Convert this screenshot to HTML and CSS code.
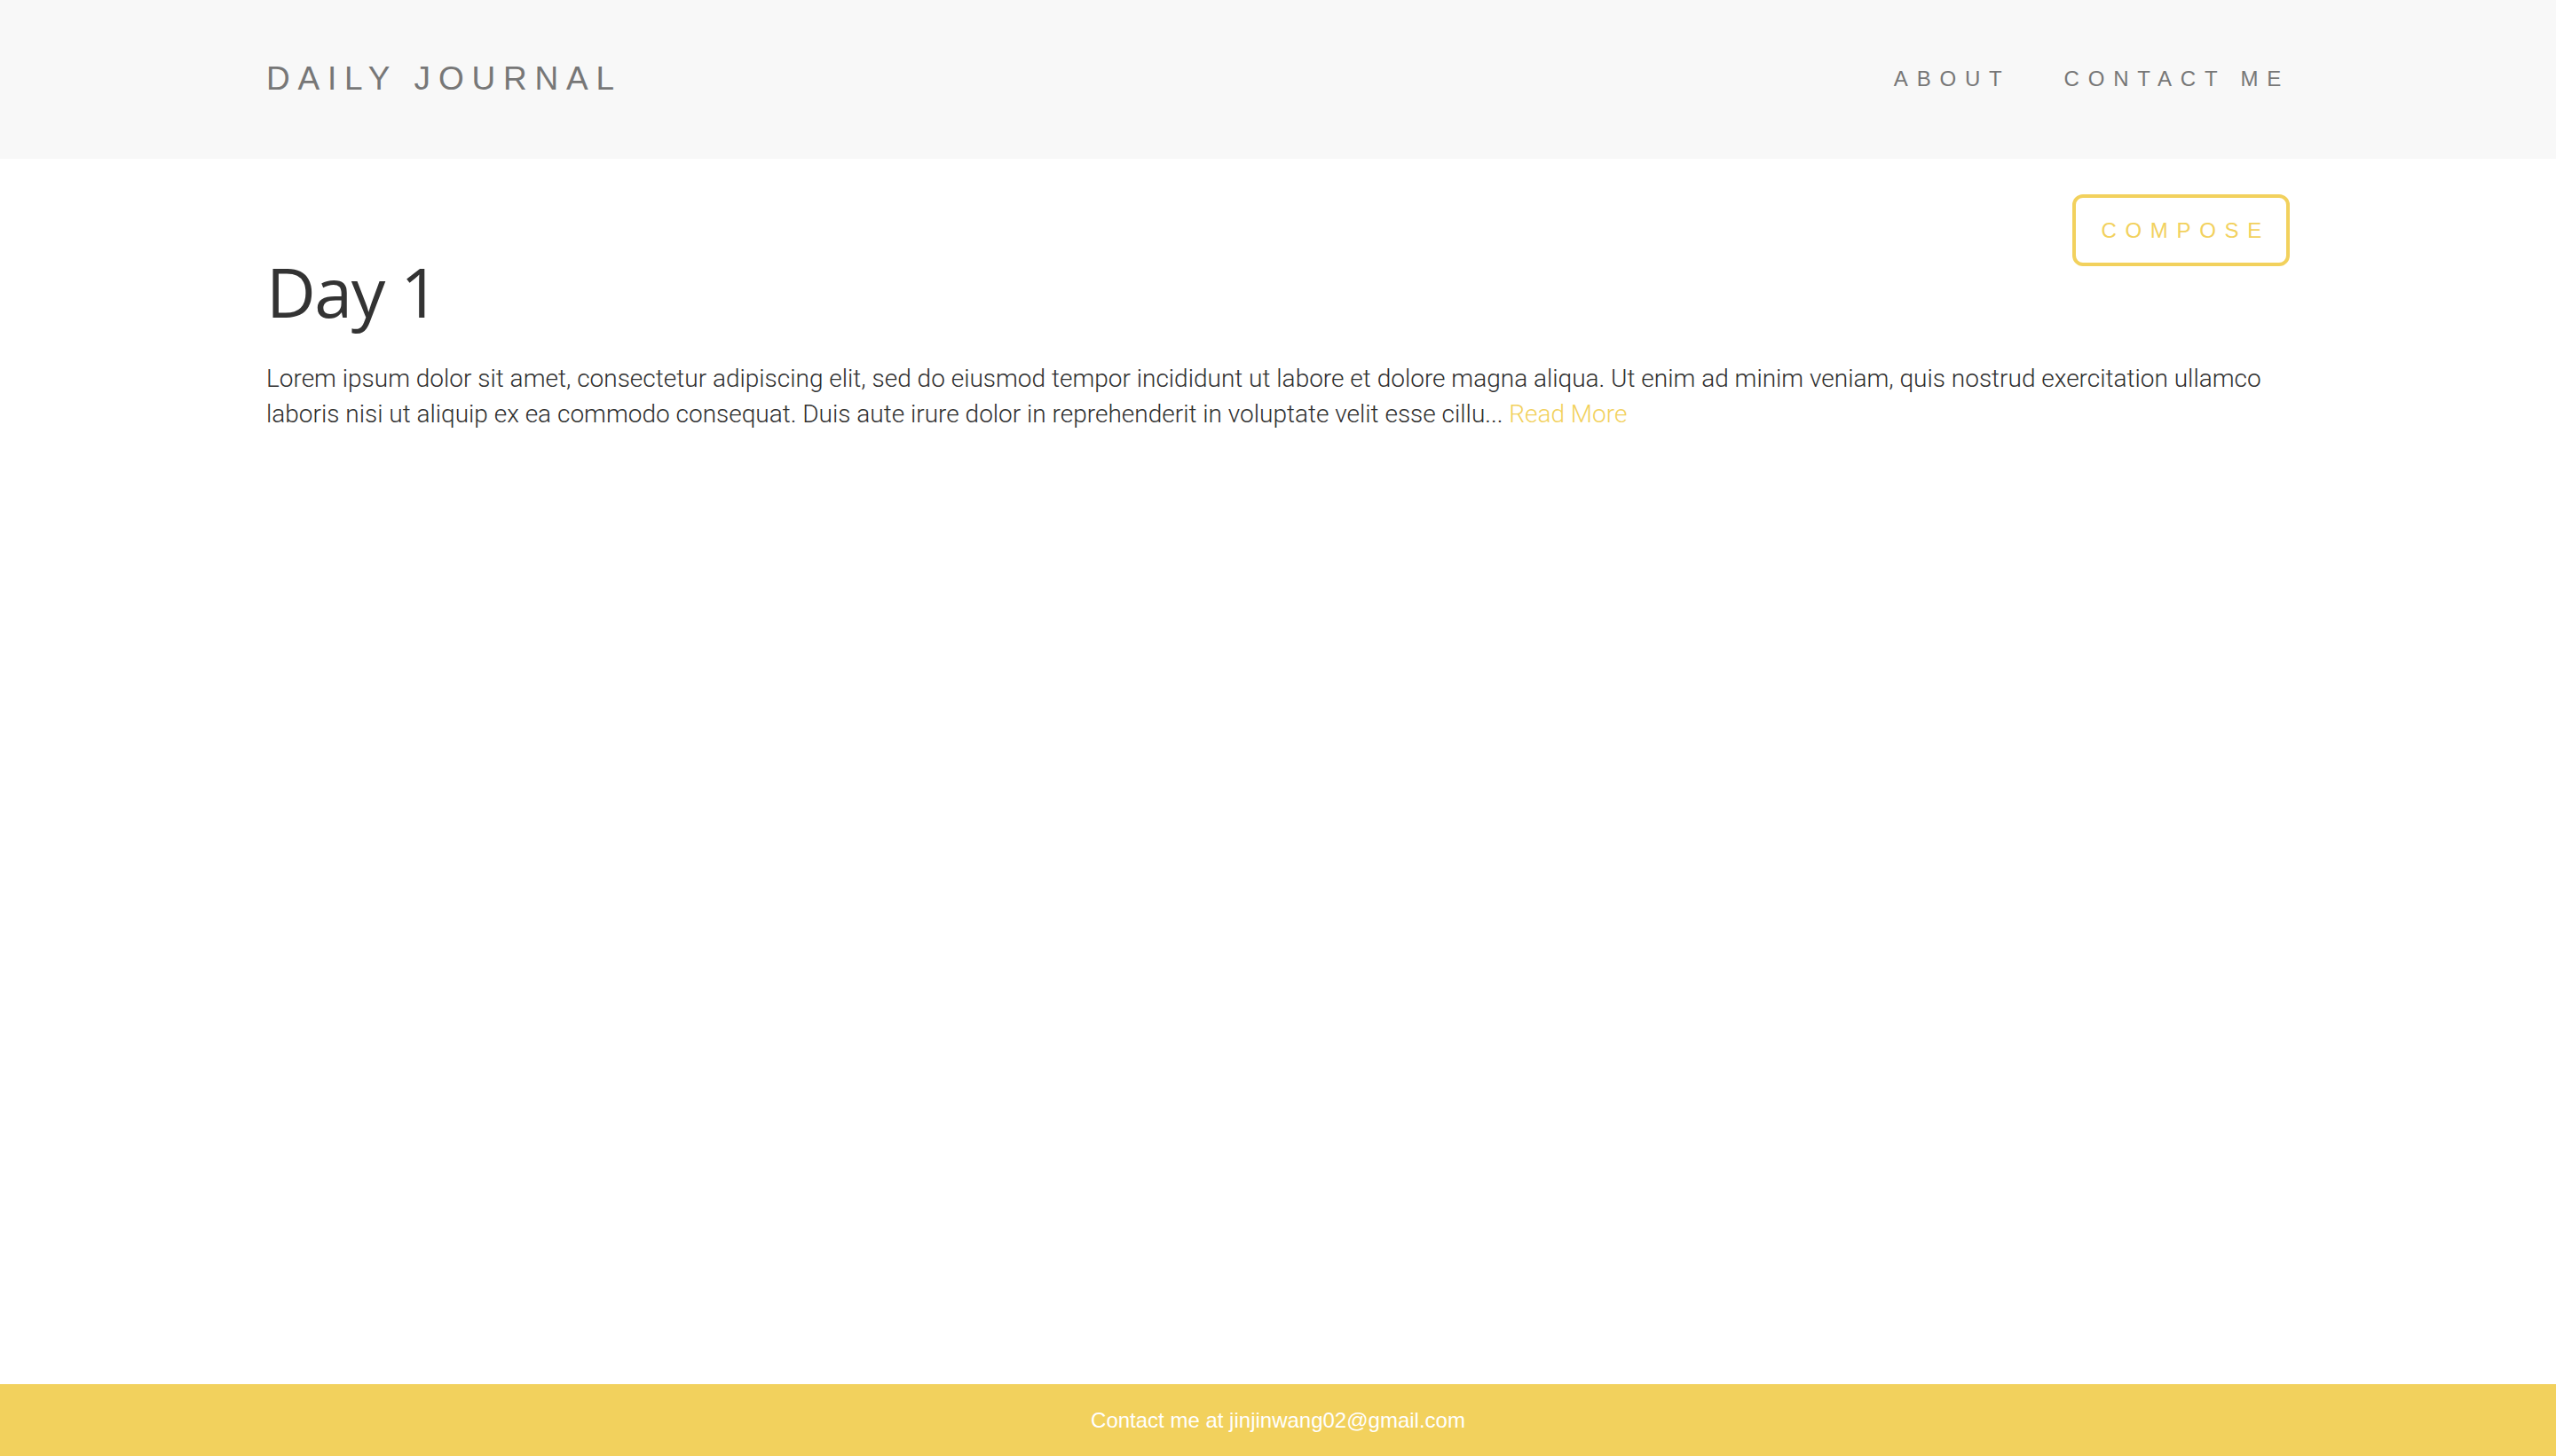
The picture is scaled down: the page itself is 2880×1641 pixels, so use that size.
FILE: index.html
```html
<!DOCTYPE html>
<html lang="en">
<head>
<meta charset="utf-8">
<title>Daily Journal</title>
<link rel="stylesheet" href="styles.css">
</head>
<body>
<div class="page">
  <header class="navbar">
    <div class="container nav-inner">
      <a class="brand" href="#">DAILY JOURNAL</a>
      <nav class="nav-links">
        <a href="#">ABOUT</a>
        <a href="#">CONTACT ME</a>
      </nav>
    </div>
  </header>
  <main class="container main">
    <a class="compose" href="#">COMPOSE</a>
    <h1 class="post-title">Day 1</h1>
    <p class="post-body">Lorem ipsum dolor sit amet, consectetur adipiscing elit, sed do eiusmod tempor incididunt ut labore et dolore magna aliqua. Ut enim ad minim veniam, quis nostrud exercitation ullamco laboris nisi ut aliquip ex ea commodo consequat. Duis aute irure dolor in reprehenderit in voluptate velit esse cillu... <a class="read-more" href="#">Read More</a></p>
  </main>
  <footer class="footer">
    <p>Contact me at jinjinwang02@gmail.com</p>
  </footer>
</div>
</body>
</html>
```

FILE: styles.css
```css
* { box-sizing: border-box; }
html, body { margin: 0; padding: 0; }
body {
  font-family: "Roboto", "Liberation Sans", sans-serif;
  font-weight: 300;
  color: #333;
  background: #fff;
}
a { text-decoration: none; }

.page {
  min-height: 100vh;
  display: flex;
  flex-direction: column;
}

.container {
  width: 2280px;
  margin: 0 auto;
}

.navbar {
  background: #f8f8f8;
  height: 179px;
}
.nav-inner {
  height: 100%;
  display: flex;
  align-items: center;
  justify-content: space-between;
  padding-bottom: 2px;
}
.brand {
  font-family: "Liberation Sans", Arial, sans-serif;
  font-weight: 400;
  font-size: 37px;
  letter-spacing: 8.8px;
  color: #777;
}
.nav-links {
  display: flex;
  gap: 60px;
}
.nav-links a {
  font-family: "Liberation Sans", Arial, sans-serif;
  font-weight: 400;
  font-size: 24px;
  letter-spacing: 9.8px;
  color: #777;
}

.main {
  flex: 1;
  padding-top: 40px;
}
.compose {
  float: right;
  height: 81px;
  display: flex;
  align-items: center;
  padding: 0 18px 0 28px;
  border: 4px solid #f2d15d;
  border-radius: 12px;
  font-family: "Liberation Sans", Arial, sans-serif;
  font-weight: 400;
  font-size: 24px;
  letter-spacing: 9.7px;
  color: #f2d15d;
}
.post-title {
  font-family: "Open Sans", sans-serif;
  font-weight: 400;
  font-size: 77px;
  line-height: 80px;
  letter-spacing: -1.5px;
  color: #333;
  margin: 70px 0 38px 0;
}
.post-body {
  font-size: 28px;
  line-height: 40px;
  margin: 0;
  color: #2f2f2f;
}
.read-more {
  color: #f2d15d;
}

.footer {
  background: #f2d15d;
  height: 81px;
  display: flex;
  align-items: center;
  justify-content: center;
}
.footer p {
  margin: 0;
  font-family: "Liberation Sans", Arial, sans-serif;
  font-size: 24px;
  color: #fff;
}
```
